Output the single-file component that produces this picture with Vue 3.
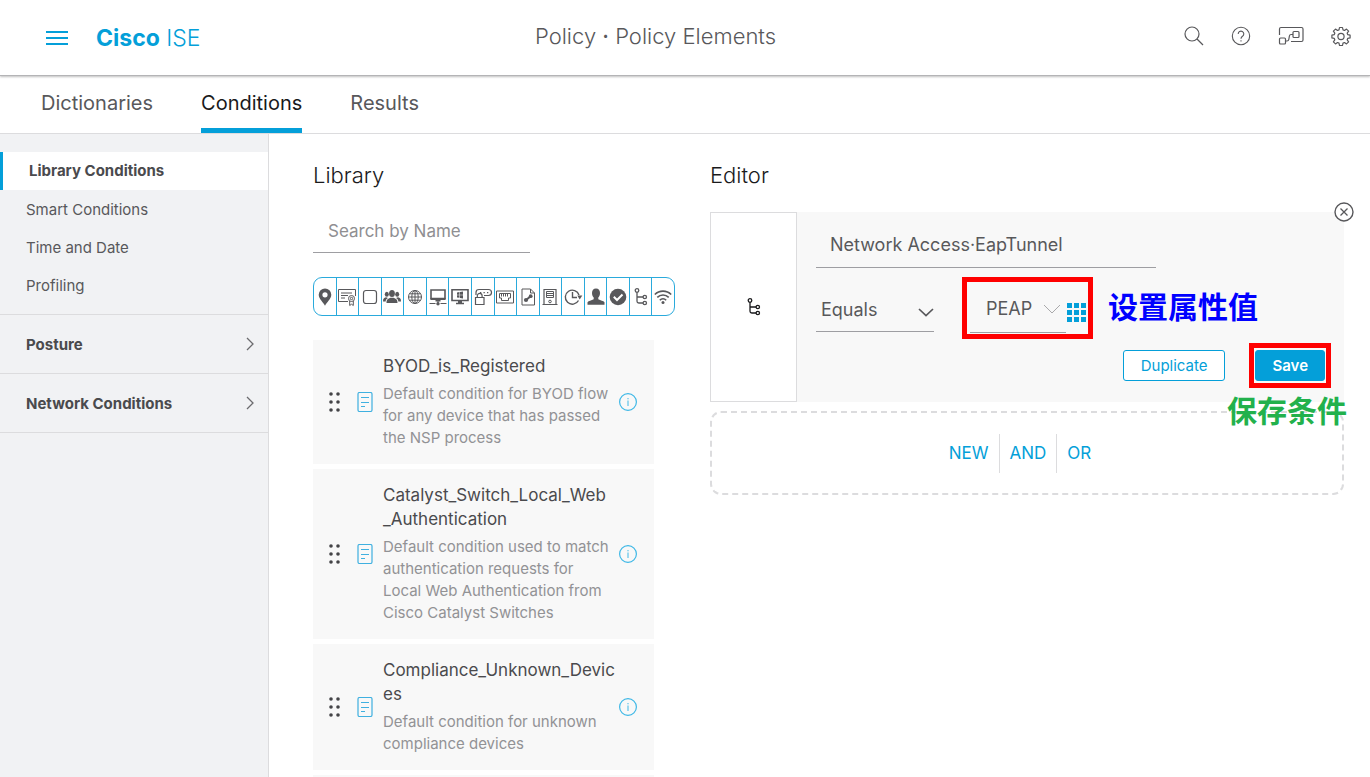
<script setup>
import { ref } from 'vue'

const tabs = ['Dictionaries', 'Conditions', 'Results']
const activeTab = ref('Conditions')

const conditionLinks = ['Library Conditions', 'Smart Conditions', 'Time and Date', 'Profiling']
const activeLink = ref('Library Conditions')
const groups = ['Posture', 'Network Conditions']

const search = ref('')
const attribute = ref('Network Access·EapTunnel')
const operator = ref('Equals')
const value = ref('PEAP')

const treeIcon =
  '<g fill="none" stroke="currentColor" stroke-width="1.3"><circle cx="6" cy="3.5" r="1.8"/><path d="M6 5.300V14.200Q6 16 7.800 16H12M6 10H12"/><circle cx="13.800" cy="10" r="1.700"/><circle cx="13.800" cy="16" r="1.700"/></g>'

const filters = [
  { name: 'Location', art: '<path fill="currentColor" fill-rule="evenodd" d="M10 1.500a6.300 6.300 0 0 0-6.300 6.300C3.700 12 8.500 15.500 10 18.800c1.500-3.300 6.300-6.800 6.300-11A6.300 6.300 0 0 0 10 1.500zm0 3.700a2.600 2.600 0 1 1 0 5.200 2.600 2.600 0 0 1 0-5.200z"/>' },
  { name: 'Certificate', art: '<g fill="none" stroke="currentColor"><path d="M11 14.500H1.500v-12h17v6.500M4 6h11M4 8.500h7M4 11h4"/><circle cx="14.500" cy="11.500" r="3"/><circle cx="14.500" cy="11.500" r="1.200"/><path d="M12.700 14v4.500l1.800-1.300 1.800 1.300V14"/></g>' },
  { name: 'Blank', art: '<rect x="3.500" y="3.500" width="13" height="13" rx="2.500" fill="none" stroke="currentColor" stroke-width="1.200"/>' },
  { name: 'Groups', art: '<g fill="currentColor"><ellipse cx="10" cy="6.500" rx="2.900" ry="3.500"/><path d="M4.500 16c0-4 2-4.300 4-5.200h3c2 .9 4 1.200 4 5.200z"/><ellipse cx="4.800" cy="7.300" rx="2" ry="2.500"/><ellipse cx="15.200" cy="7.300" rx="2" ry="2.500"/><path d="M1 14.500c0-3 1-3.600 3-4.200l2 .7c-1.700.9-2.300 2-2.300 3.500zM19 14.500c0-3-1-3.600-3-4.200l-2 .7c1.700.9 2.300 2 2.300 3.500z"/></g>' },
  { name: 'Network', art: '<g fill="none" stroke="currentColor"><circle cx="10" cy="10" r="6.500"/><ellipse cx="10" cy="10" rx="3.200" ry="6.500"/><path d="M10 3.500v13M3.500 10h13M4.500 6.800h11M4.500 13.200h11"/></g>' },
  { name: 'Device', art: '<path d="M3 3h14v8.500H3z" fill="none" stroke="currentColor" stroke-width="1.600"/><path d="M2.500 11h15v2h-15zM7.500 13h5v1.500h-5zM9.500 14h1v2h-1zM1.500 16h6v1h-6zM12.500 16h6v1h-6z" fill="currentColor"/><circle cx="10" cy="16.800" r="1.700" fill="currentColor"/>' },
  { name: 'Operating system', art: '<path d="M2 2.800h16v10.700H2z" fill="none" stroke="currentColor" stroke-width="1.600"/><path d="M7 5.500l2.500-.4v2.600H7zM10 5l3-.5v3.200h-3zM7 8.200h2.500v2.600L7 10.400zM10 8.200h3v3.200l-3-.5zM8 14h4v2H8zM6 15.800h8v1.400H6z" fill="currentColor"/>' },
  { name: 'Password', art: '<g fill="none" stroke="currentColor" stroke-width="1.200"><path d="M3 8V5.500Q3 2.500 6 2.500h9.500q3 0 3 3t-3 3H11"/><path d="M2.500 10.500h8.500v7H2.500zM4.300 10.500V8.800a2.400 2.400 0 0 1 4.800 0v1.700"/></g><path d="M7 5h1.300v1.200H7zM10.500 5h1.300v1.200h-1.300zM14 5h1.300v1.200H14z" fill="currentColor"/>' },
  { name: 'Port', art: '<g fill="none" stroke="currentColor"><path d="M1.500 4h17v12h-17z"/><path d="M4.500 6.500h11v4.500h-2v2.500h-7V11h-2z"/><path d="M6.500 7v2.500M8.500 7v2.500M10.500 7v2.500M12.500 7v2.500"/></g>' },
  { name: 'Protocol', art: '<path d="M4 2h8.500L16.500 6v12H4z" fill="none" stroke="currentColor"/><path d="M12.500 2v4h4" fill="none" stroke="currentColor"/><path d="M8 13l5-4" stroke="currentColor" stroke-width="2"/><circle cx="8" cy="13" r="2.100" fill="currentColor"/><circle cx="12.700" cy="9.200" r="1.900" fill="currentColor"/>' },
  { name: 'Server', art: '<g fill="none" stroke="currentColor"><path d="M4 17.500v-15h12v15M2.500 17.500h15" stroke-width="1.200"/><path d="M6.500 4.500h7v6h-7zM6.500 6.500h7M6.500 8.500h7"/><circle cx="10" cy="14.500" r="1.300"/></g>' },
  { name: 'Time', art: '<g fill="none" stroke="currentColor" stroke-width="1.400"><path d="M15.500 13.500A7 7 0 1 1 16 8"/><path d="M9.500 5v5.500H14"/></g><path d="M14.300 8.500h5l-2.600 4z" fill="currentColor"/>' },
  { name: 'User', art: '<path d="M10 1.500c2.600 0 4 1.800 4 4.500 0 2.200-.8 3.400-1.700 4.500v1.700c2.200 1.300 5.200 1.500 6.200 3v2.600h-17v-2.600c1-1.500 4-1.700 6.200-3v-1.700C6.800 9.400 6 8.200 6 6c0-2.700 1.400-4.500 4-4.500z" fill="currentColor"/>' },
  { name: 'Compliance', art: '<circle cx="10" cy="10" r="8.300" fill="currentColor"/><path d="M5.800 9.800l3.200 3.200 5.500-5.500" fill="none" stroke="#fff" stroke-width="2"/>' },
  { name: 'Attribute', art: treeIcon },
  { name: 'Wireless', art: '<g fill="none" stroke="currentColor" stroke-width="1.600"><path d="M1.800 7.500a11.600 11.600 0 0 1 16.400 0M4.300 10.400a8 8 0 0 1 11.400 0M6.800 13.200a4.600 4.600 0 0 1 6.400 0"/></g><circle cx="10" cy="15.500" r="1.500" fill="currentColor"/>' },
]

const conditions = [
  {
    name: 'BYOD_is_Registered',
    text: 'Default condition for BYOD flow\nfor any device that has passed\nthe NSP process',
  },
  {
    name: 'Catalyst_Switch_Local_Web\n_Authentication',
    text: 'Default condition used to match\nauthentication requests for\nLocal Web Authentication from\nCisco Catalyst Switches',
  },
  {
    name: 'Compliance_Unknown_Devic\nes',
    text: 'Default condition for unknown\ncompliance devices',
  },
]
</script>

<template>
  <div class="page">
    <header class="topbar">
      <div class="brand">
        <button class="icon-btn" type="button" aria-label="Menu">
          <svg width="22" height="14" viewBox="0 0 22 14"><path d="M0 0h22v2H0zM0 6h22v2H0zM0 12h22v2H0z" fill="#049fd9" /></svg>
        </button>
        <a class="logo" href="#"><b>Cisco</b> ISE</a>
      </div>
      <h1 class="title">Policy <span class="dot">·</span> Policy Elements</h1>
      <div class="tools">
        <button class="icon-btn" type="button" aria-label="Search">
          <svg width="20" height="20" viewBox="0 0 20 20" fill="none" stroke="#58585b" stroke-width="1.2"><circle cx="8" cy="8" r="7" /><path d="M13 13l6 6" /></svg>
        </button>
        <button class="icon-btn" type="button" aria-label="Help">
          <svg width="20" height="20" viewBox="0 0 20 20" fill="none" stroke="#58585b" stroke-width="1.1"><circle cx="10" cy="10" r="8.700" /><path d="M7.200 8a2.800 2.800 0 1 1 4.300 2.300C10.300 11.100 10 11.500 10 12.800M10 14.200v1.300" /></svg>
        </button>
        <button class="icon-btn" type="button" aria-label="Workflow">
          <svg width="26" height="20" viewBox="0 0 26 20" fill="none" stroke="#58585b" stroke-width="1.200"><path d="M1.500 9V3q0-1.500 1.500-1.500h20.500q1.500 0 1.500 1.500v11q0 1.500-1.500 1.500H13" /><rect x="1.500" y="12" width="6" height="6" rx="1" /><rect x="15" y="5.500" width="6" height="6" rx="1" /><path d="M7.500 15H9q1.500 0 1.800-1.500l.6-3.500Q11.700 8.500 13 8.500h2" /></svg>
        </button>
        <button class="icon-btn" type="button" aria-label="Settings">
          <svg width="20" height="20" viewBox="0 0 20 20" fill="none" stroke="#58585b" stroke-width="1.200" stroke-linejoin="round"><path d="M8.500 1.500h3l.5 2.400 1.500.6 2-1.400 2.100 2.100-1.400 2 .6 1.500 2.300.4v2.800l-2.300.4-.6 1.500 1.400 2-2.100 2.100-2-1.400-1.500.6-.5 2.400h-3L8 17.100l-1.500-.6-2 1.400-2.100-2.100 1.400-2-.6-1.500-2.300-.4V9.100l2.300-.4.6-1.500-1.400-2 2.100-2.100 2 1.400L8 3.900z" /><circle cx="10" cy="10.500" r="3.100" /></svg>
        </button>
      </div>
    </header>

    <nav class="tabs">
      <a v-for="tab in tabs" :key="tab" href="#" class="tab" :class="{ active: tab === activeTab }" @click.prevent="activeTab = tab">{{ tab }}</a>
    </nav>

    <div class="workspace">
      <aside class="sidebar">
        <nav class="links">
          <a v-for="link in conditionLinks" :key="link" href="#" class="link" :class="{ active: link === activeLink }" @click.prevent="activeLink = link">{{ link }}</a>
        </nav>
        <button v-for="group in groups" :key="group" class="group" type="button">
          <span>{{ group }}</span>
          <svg width="8" height="14" viewBox="0 0 8 14" fill="none" stroke="#6b6b6e" stroke-width="1.300"><path d="M1 1l6 6-6 6" /></svg>
        </button>
      </aside>

      <main class="content">
        <section class="library">
          <h2 class="heading">Library</h2>
          <input v-model="search" class="search" type="text" placeholder="Search by Name" aria-label="Search by Name" />
          <div class="filters">
            <button v-for="filter in filters" :key="filter.name" class="filter" type="button" :aria-label="filter.name">
              <svg width="20" height="20" viewBox="0 0 20 20" v-html="filter.art"></svg>
            </button>
          </div>
          <div class="list">
            <article v-for="condition in conditions" :key="condition.name" class="card">
              <svg class="grip" width="12" height="20" viewBox="0 0 12 20" fill="#444447"><circle cx="2" cy="2" r="1.800" /><circle cx="9" cy="2" r="1.800" /><circle cx="2" cy="10" r="1.800" /><circle cx="9" cy="10" r="1.800" /><circle cx="2" cy="18" r="1.800" /><circle cx="9" cy="18" r="1.800" /></svg>
              <svg class="doc" width="16" height="20" viewBox="0 0 16 20" fill="none" stroke="#3fb0e0"><rect x="1" y="0.500" width="14" height="19" rx="1.500" stroke-width="1.200" /><path d="M4 5.500h8M4 10.500h8M4 14.500h4" /></svg>
              <div class="card-text">
                <h3 class="card-name">{{ condition.name }}</h3>
                <p class="card-desc">{{ condition.text }}</p>
              </div>
              <button class="icon-btn" type="button" aria-label="Details">
                <svg width="18" height="18" viewBox="0 0 18 18" fill="none" stroke="#3fb8e6"><circle cx="9" cy="9" r="8.400" stroke-width="1.200" /><path d="M9 7.500v5.500M9 5v1.300" /></svg>
              </button>
            </article>
            <article class="card next"></article>
          </div>
        </section>

        <section class="editor">
          <h2 class="heading">Editor</h2>
          <form class="rule" @submit.prevent>
            <div class="rule-type">
              <svg width="20" height="20" viewBox="0 0 20 20" v-html="treeIcon"></svg>
            </div>
            <div class="rule-body">
              <input v-model="attribute" class="attribute" type="text" aria-label="Attribute" />
              <div class="rule-row">
                <div class="operator">
                  <select v-model="operator" class="select" aria-label="Operator">
                    <option>Equals</option>
                  </select>
                  <svg class="chevron" width="16" height="9" viewBox="0 0 16 9" fill="none" stroke="#58585b" stroke-width="1.700"><path d="M1 1l7 6.500L15 1" /></svg>
                </div>
                <div class="marked value">
                  <div class="value-field">
                    <select v-model="value" class="select" aria-label="Attribute value">
                      <option>PEAP</option>
                    </select>
                    <svg class="chevron" width="18" height="10" viewBox="0 0 18 10" fill="none" stroke="#a9a9ab"><path d="M1 1l8 8 8-8" /></svg>
                  </div>
                  <button class="icon-btn" type="button" aria-label="Choose value">
                    <svg width="19" height="19" viewBox="0 0 19 19" fill="#049fd9"><path d="M0 0h5v5H0zM7 0h5v5H7zM14 0h5v5h-5zM0 7h5v5H0zM7 7h5v5H7zM14 7h5v5h-5zM0 14h5v5H0zM7 14h5v5H7zM14 14h5v5h-5z" /></svg>
                  </button>
                  <strong class="note note-value">设置属性值</strong>
                </div>
              </div>
              <div class="actions">
                <button class="btn" type="button">Duplicate</button>
                <div class="marked save">
                  <button class="btn primary" type="submit">Save</button>
                  <strong class="note note-save">保存条件</strong>
                </div>
              </div>
            </div>
            <button class="icon-btn close" type="button" aria-label="Close">
              <svg width="20" height="20" viewBox="0 0 20 20" stroke="#58585b"><circle cx="10" cy="10" r="9" fill="#fff" stroke-width="1.400" /><path d="M6.500 6.500l7 7M13.500 6.500l-7 7" stroke-width="1.300" /></svg>
            </button>
          </form>
          <div class="append">
            <button class="append-btn" type="button">NEW</button>
            <button class="append-btn" type="button">AND</button>
            <button class="append-btn" type="button">OR</button>
          </div>
        </section>
      </main>
    </div>
  </div>
</template>

<style>
body {
  margin: 0;
}
</style>

<style scoped>
* {
  box-sizing: border-box;
}
.page {
  display: flex;
  flex-direction: column;
  height: 100vh;
  overflow: hidden;
  background: #fff;
  color: #58585b;
  font-family: Inter, "Liberation Sans", "Noto Sans CJK SC", sans-serif;
  font-size: 15px;
}
h1, h2, h3, p {
  margin: 0;
  font-weight: 400;
}
a {
  color: inherit;
  text-decoration: none;
}
button, input, select {
  margin: 0;
  padding: 0;
  border: 0;
  border-radius: 0;
  background: none;
  color: inherit;
  font: inherit;
  outline: 0;
}
svg {
  display: block;
  flex: none;
}
.icon-btn {
  flex: none;
}
.topbar {
  position: relative;
  flex: none;
  display: flex;
  align-items: center;
  height: 76px;
  padding: 0 19px 4px 46px;
  border-bottom: 1px solid #b4b4b6;
  box-shadow: 0 1px 2px rgba(0, 0, 0, 0.25);
}
.brand {
  flex: 0 0 489px;
  display: flex;
  align-items: center;
  gap: 28px;
  padding-top: 4px;
}
.logo {
  color: #049fd9;
  font-size: 23px;
  font-weight: 300;
  line-height: 28px;
}
.logo b {
  font-weight: 700;
}
.title {
  font-size: 22px;
  font-weight: 300;
  line-height: 28px;
}
.dot {
  font-weight: 500;
}
.tools {
  display: flex;
  align-items: center;
  gap: 27px;
  margin-left: auto;
}
.tabs {
  flex: none;
  display: flex;
  gap: 48px;
  height: 58px;
  padding-left: 41px;
  border-bottom: 1px solid #dcdcde;
}
.tab {
  padding-top: 13px;
  border-bottom: 5px solid transparent;
  font-size: 20px;
  line-height: 28px;
}
.tab.active {
  border-color: #049fd9;
  color: #1a1a1c;
}
.workspace {
  flex: 1;
  display: flex;
  min-height: 0;
}
.sidebar {
  flex: 0 0 269px;
  padding-top: 18px;
  border-right: 1px solid #dcdcde;
  background: #f1f2f4;
}
.links {
  display: flex;
  flex-direction: column;
  padding-bottom: 9px;
  border-bottom: 1px solid #dcdcde;
}
.link {
  height: 38px;
  padding-left: 26px;
  line-height: 38px;
}
.link.active {
  margin-bottom: 1px;
  border-left: 3px solid #049fd9;
  background: #fff;
  color: #4a4a4d;
  font-weight: 700;
}
.group {
  display: flex;
  align-items: center;
  justify-content: space-between;
  width: 100%;
  height: 59px;
  padding: 0 14px 0 26px;
  border-bottom: 1px solid #dcdcde;
  color: #4a4a4d;
  font-weight: 700;
}
.content {
  flex: 1;
  display: flex;
  gap: 35px;
  min-width: 0;
  padding: 27px 26px 0 44px;
}
.library {
  flex: 0 0 362px;
  display: flex;
  flex-direction: column;
}
.heading {
  color: #1a1a1c;
  font-size: 22px;
  font-weight: 300;
  line-height: 28px;
}
.search {
  flex: none;
  width: 60%;
  height: 44px;
  margin-top: 20px;
  padding-left: 15px;
  border-bottom: 1px solid #9e9ea2;
  font-size: 17px;
}
.search::placeholder {
  color: #8f8f92;
  opacity: 1;
}
.filters {
  flex: none;
  display: flex;
  height: 39px;
  margin: 24px 0;
  border: 1px solid #2aaadc;
  border-radius: 9px;
}
.filter {
  flex: 1;
  display: flex;
  align-items: center;
  justify-content: center;
  min-width: 0;
}
.filter + .filter {
  border-left: 1px solid #2aaadc;
}
.filter svg {
  width: 20px;
  height: 20px;
}
.list {
  display: flex;
  flex-direction: column;
  gap: 5px;
  margin-right: 21px;
}
.card {
  flex: none;
  display: flex;
  align-items: center;
  padding: 14px 17px 15px 16px;
  background: #f8f8f8;
}
.next {
  height: 124px;
}
.doc {
  margin: 0 10px 0 16px;
}
.card-text {
  flex: 1;
  white-space: pre;
}
.card-name {
  color: #4a4a4d;
  font-size: 17px;
  line-height: 24px;
}
.card-desc {
  margin-top: 5px;
  color: #929295;
  line-height: 22px;
}
.editor {
  flex: 1;
  min-width: 0;
}
.rule {
  position: relative;
  display: flex;
  margin-top: 23px;
  background: #f8f8f8;
}
.rule-type {
  flex: 0 0 87px;
  display: flex;
  align-items: center;
  justify-content: center;
  border: 1px solid #dcdcde;
  background: #fff;
  color: #1a1a1c;
}
.rule-body {
  flex: 1;
  padding: 10px 13px 14px 19px;
}
.attribute {
  display: block;
  width: 340px;
  height: 46px;
  padding-left: 14px;
  border-bottom: 1px solid #9e9ea2;
  font-size: 18px;
}
.rule-row {
  display: flex;
  align-items: center;
  gap: 28px;
  margin-top: 9px;
  font-size: 18px;
}
.operator,
.value-field {
  display: flex;
  align-items: center;
  border-bottom: 1px solid #9e9ea2;
}
.operator {
  width: 118px;
  height: 48px;
  padding-top: 4px;
}
.select {
  flex: 1;
  min-width: 0;
  height: 100%;
  appearance: none;
}
.operator .select {
  padding-left: 5px;
}
.operator .chevron {
  margin-top: 6px;
}
.marked {
  position: relative;
  border: 5px solid #f00;
}
.value {
  display: flex;
  align-items: center;
  width: 131px;
  height: 62px;
  padding-left: 3px;
}
.value-field {
  width: 96px;
  height: 50px;
  padding-top: 2px;
  padding-right: 5px;
}
.value-field .select {
  padding-left: 16px;
}
.value .icon-btn {
  margin: 8px 0 0 1px;
}
.note {
  position: absolute;
  color: #00f;
  font-family: "Noto Sans CJK SC", sans-serif;
  font-size: 30px;
  font-weight: 700;
  line-height: 36px;
  white-space: nowrap;
}
.note-value {
  top: 5px;
  left: 141px;
}
.note-save {
  top: 43px;
  right: -21px;
  color: #22b14c;
}
.actions {
  display: flex;
  align-items: center;
  justify-content: flex-end;
  gap: 24px;
  margin-top: 4px;
}
.save {
  padding: 2px 1px;
}
.btn {
  display: block;
  height: 31px;
  padding: 0 17px;
  border: 1px solid #049fd9;
  border-radius: 3px;
  background: #fff;
  color: #049fd9;
  font-size: 15px;
}
.btn.primary {
  padding: 0 16px;
  background: #049fd9;
  color: #fff;
  font-weight: 600;
}
.close {
  position: absolute;
  top: -10px;
  right: -10px;
}
.append {
  display: flex;
  align-items: center;
  justify-content: center;
  height: 84px;
  margin-top: 9px;
  padding-right: 14px;
  border: 2px dashed #dcdcde;
  border-radius: 11px;
}
.append-btn {
  height: 39px;
  padding: 0 10px;
  color: #049fd9;
  font-size: 17px;
}
.append-btn + .append-btn {
  border-left: 1px solid #dcdcde;
}
</style>
